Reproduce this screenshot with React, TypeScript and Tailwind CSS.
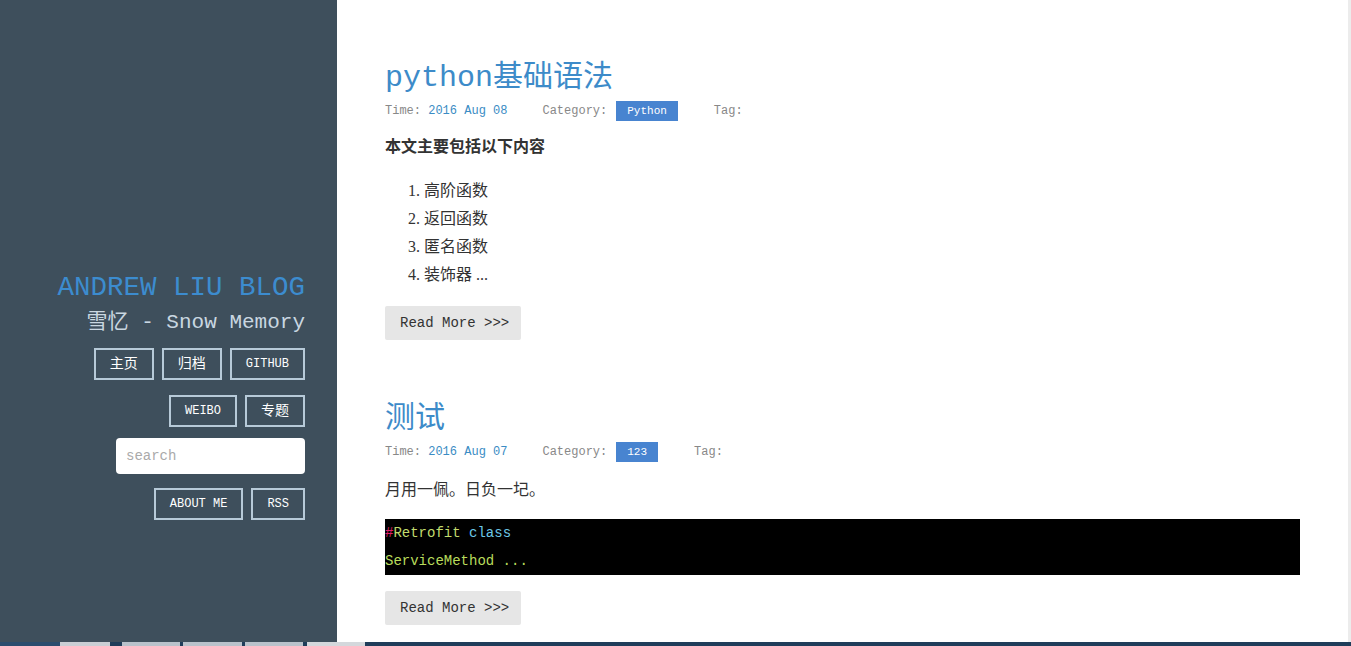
const mono = "font-['Liberation_Mono','Noto_Sans_CJK_SC',monospace]";
const body = "font-['Liberation_Serif','Noto_Sans_CJK_SC',serif]";

function NavButton({ label, cjk }: { label: string; cjk?: boolean }) {
  return (
    <a
      href="#"
      className={`flex h-[32px] items-center border-2 border-[#b7cad8] px-[14px] text-white ${cjk ? 'text-[14px]' : 'text-[12px]'}`}
    >
      {label}
    </a>
  );
}

function Meta({ date, category }: { date: string; category: string }) {
  return (
    <div className={`flex h-[20px] items-center text-[12px] text-[#888] ${mono}`}>
      <span className="mr-[35px]">
        Time: <span className="text-[#3a8cc4]">{date}</span>
      </span>
      <span>Category:</span>
      <span className="ml-[9px] mr-[36px] flex h-[20px] items-center bg-[#4884d0] px-[11px] text-[11px] text-white">
        {category}
      </span>
      <span>Tag:</span>
    </div>
  );
}

function ReadMore() {
  return (
    <a
      href="#"
      className={`flex h-[34px] w-[136px] items-center rounded-[2px] bg-[#e6e6e6] pl-[15px] text-[14px] text-[#333] ${mono}`}
    >
      Read More &gt;&gt;&gt;
    </a>
  );
}

export default function App() {
  return (
    <div className="flex h-[646px] w-[1351px] flex-col overflow-hidden">
      <div className="flex h-[642px]">
        <aside className={`flex w-[337px] flex-col items-end bg-[#3e4f5c] pr-[32px] pt-[270px] ${mono}`}>
          <h1 className="text-[27.5px] leading-[36px] text-[#3c8ccf]">ANDREW LIU BLOG</h1>
          <div className="mt-[3px] text-[21px] leading-[28px] text-[#c9d7e1]">雪忆 - Snow Memory</div>
          <nav className="mt-[11px] flex gap-[8px]">
            <NavButton label="主页" cjk />
            <NavButton label="归档" cjk />
            <NavButton label="GITHUB" />
          </nav>
          <nav className="mt-[15px] flex gap-[8px]">
            <NavButton label="WEIBO" />
            <NavButton label="专题" cjk />
          </nav>
          <input
            placeholder="search"
            className={`mt-[11px] h-[36px] w-[189px] rounded-[4px] bg-white px-[10px] text-[14px] text-[#333] outline-none placeholder:text-[#aaa] ${mono}`}
          />
          <nav className="mt-[14px] flex gap-[8px]">
            <NavButton label="ABOUT ME" />
            <NavButton label="RSS" />
          </nav>
        </aside>

        <main className="flex-1 bg-white px-[48px] pt-[60px]">
          <article className="flex flex-col items-start">
            <h2 className={`text-[30px] leading-[36px] text-[#3d8bc9] ${mono}`}>python基础语法</h2>
            <div className="mt-[5px]">
              <Meta date="2016 Aug 08" category="Python" />
            </div>
            <p className={`mt-[14px] text-[16px] font-bold leading-[24px] text-[#333] ${body}`}>本文主要包括以下内容</p>
            <ol className={`mt-[18px] list-decimal pl-[39px] text-[16px] leading-[28px] text-[#333] ${body}`}>
              <li>高阶函数</li>
              <li>返回函数</li>
              <li>匿名函数</li>
              <li>装饰器 ...</li>
            </ol>
            <div className="mt-[17px]">
              <ReadMore />
            </div>
          </article>

          <article className="mt-[61px] flex flex-col items-start">
            <h2 className={`text-[30px] leading-[36px] text-[#3d8bc9] ${mono}`}>测试</h2>
            <div className="mt-[5px]">
              <Meta date="2016 Aug 07" category="123" />
            </div>
            <p className={`mt-[16px] text-[16px] leading-[24px] text-[#333] ${body}`}>月用一佩。日负一圮。</p>
            <pre className={`mt-[17px] w-full bg-black text-[14px] leading-[28px] ${mono}`}>
              <div>
                <span className="text-[#e0206a]">#</span>
                <span className="text-[#c2dc6e]">Retrofit</span>{' '}
                <span className="text-[#6cc7e6]">class</span>
              </div>
              <div className="text-[#b8dc5c]">ServiceMethod ...</div>
            </pre>
            <div className="mt-[16px]">
              <ReadMore />
            </div>
          </article>
        </main>
        <div className="w-[3px] bg-[#ececec]" />
      </div>
      <div className="flex h-[4px] bg-[#1f3d5a]">
        <div className="w-[60px] bg-[#2b4d6e]" />
        <div className="w-[50px] bg-[#c9ced4]" />
        <div className="ml-[12px] w-[58px] bg-[#b9c2cb]" />
        <div className="ml-[3px] w-[59px] bg-[#b9c2cb]" />
        <div className="ml-[3px] w-[58px] bg-[#b9c2cb]" />
        <div className="ml-[4px] w-[58px] bg-[#d4d8dc]" />
      </div>
    </div>
  );
}
